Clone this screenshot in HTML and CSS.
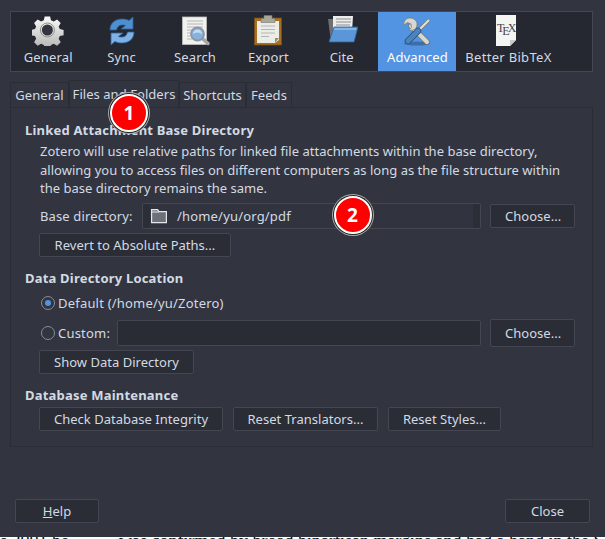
FILE: index.html
```html
<!DOCTYPE html>
<html lang="en">
<head>
  <meta charset="UTF-8">
  <title>Zotero Preferences</title>
  <link rel="stylesheet" href="styles.css">
</head>
<body>
  <div class="window">
    <div class="toolbar">
      <div class="pane-btn">
        <svg class="pane-icon" viewBox="0 0 32 32">
          <defs>
            <linearGradient id="gearFill" x1="0" y1="0" x2="0" y2="1"><stop offset="0" stop-color="#fafafa"/><stop offset="1" stop-color="#b4b4b4"/></linearGradient>
          </defs>
          <path fill="url(#gearFill)" d="M13 1h6l1 4.200 3 1.300 3.800-2.300 4 4-2.300 3.800 1.300 3 4.200 1v5.800l-4.200 1-1.300 3 2.300 3.800-4 4-3.800-2.300-3 1.300-1 4.200h-6l-1-4.200-3-1.300-3.800 2.300-4-4 2.300-3.800-1.300-3-4.200-1v-5.800l4.200-1 1.300-3-2.300-3.800 4-4 3.800 2.300 3-1.300z" transform="translate(1 1.600) scale(.9)"/>
          <circle cx="15.400" cy="16" r="5.500" fill="#33353c"/>
          <circle cx="15.400" cy="16" r="7" fill="none" stroke="#8f8f8f" stroke-width="1"/>
        </svg>
        <span>General</span>
      </div>
      <div class="pane-btn">
        <svg class="pane-icon" viewBox="0 0 32 32">
          <path fill="#4f8fd0" stroke="#2c5f9e" stroke-width=".8" d="M4 16C4 9 9 5 16 5c3 0 5 .5 7 1.500L27 3v12H15l4.500-3.500C18.500 11 17.500 11 16 11c-3 0-5 2-5.500 5z"/>
          <path fill="#7fb2e4" stroke="#2c5f9e" stroke-width=".8" d="M28 18c0 7-5 11-12 11-3 0-5-.5-7-1.500L5 31V19h12l-4.500 3.500c1 .5 2 .5 3.500.5 3 0 5-2 5.500-5z"/>
        </svg>
        <span>Sync</span>
      </div>
      <div class="pane-btn">
        <svg class="pane-icon" viewBox="0 0 32 32">
          <rect x="3.500" y="3" width="24" height="27.500" fill="#f1f1ee" stroke="#bdbdbd" stroke-width=".8"/>
          <path stroke="#b3b6ba" stroke-width="1" d="M8 7h16M8 10h16M8 13h16M8 16h5M8 19h3M8 22h3M8 25h5"/>
          <path stroke="#a5a7a9" stroke-width="3.500" stroke-linecap="round" d="M24 25l5 4.500"/>
          <circle cx="18.500" cy="20" r="6.500" fill="#86b2dc" stroke="#8c96a3" stroke-width="1.800"/>
          <path fill="#c4dcf2" d="M14 20a4.500 4.500 0 0 1 9 0c-3-2-6-2-9 0z"/>
        </svg>
        <span>Search</span>
      </div>
      <div class="pane-btn">
        <svg class="pane-icon" viewBox="0 0 32 32">
          <rect x="2.500" y="4" width="27" height="27" fill="#a86f1e" stroke="#7c4e10" stroke-width=".8"/>
          <path fill="#ebebe7" d="M5 7h22v19l-4 3H5z"/>
          <path fill="#8f8f8a" d="M23 29v-5h4z"/>
          <path stroke="#b4b4b0" stroke-width="1" d="M9 12h14M9 15.500h14M9 19h14M9 22.500h8"/>
          <path fill="#a8a89a" stroke="#77776c" stroke-width=".6" d="M12 1.500h8v3h3v4H9v-4h3z"/>
        </svg>
        <span>Export</span>
      </div>
      <div class="pane-btn">
        <svg class="pane-icon" viewBox="0 0 32 32">
          <path fill="#6f6f6f" d="M2 5h9l2-2h6v25H5z"/>
          <path fill="#ececec" d="M7 2h20l-1 16H7z"/>
          <path stroke="#8e8e8e" stroke-width="1" d="M10 5h15M10 8h15M10 11h14"/>
          <path fill="#5b97d8" stroke="#2e5f98" stroke-width=".8" d="M8 13h24l-4 15H3z"/>
          <path fill="#85b6e8" d="M8.500 14h22l-.6 2H8z"/>
        </svg>
        <span>Cite</span>
      </div>
      <div class="pane-btn pane-active">
        <svg class="pane-icon" viewBox="0 0 32 32">
          <ellipse cx="16" cy="29.500" rx="13" ry="2" fill="#3c6ea8"/>
          <path stroke="#77776f" stroke-width="5.500" stroke-linecap="round" d="M10 12l16 16"/>
          <path stroke="#d8d8d2" stroke-width="4" stroke-linecap="round" d="M10 12l16 16"/>
          <path fill="#d8d8d2" stroke="#77776f" stroke-width=".7" d="M9 4C5 4 2.500 7 3 11l3.500-2.500L10 10l.5 3.500L8 16c3.500 1 7.500-.5 8-5 .5-4-3-7-7-7z"/>
          <path stroke="#77776f" stroke-width="3.400" stroke-linecap="round" d="M27.500 6.500L17 17"/>
          <path stroke="#e0e0da" stroke-width="2.200" stroke-linecap="round" d="M27.500 6.500L17 17"/>
          <path stroke="#234f7e" stroke-width="6.500" stroke-linecap="round" d="M17 17L7 27"/>
          <path stroke="#4a83bd" stroke-width="5" stroke-linecap="round" d="M17 17L7 27"/>
        </svg>
        <span>Advanced</span>
      </div>
      <div class="pane-btn pane-wide">
        <svg class="pane-icon" viewBox="0 0 32 32">
          <path fill="#f4f4f2" d="M4 1h20v25l-6 6H4z"/>
          <path fill="#c9c9c7" d="M18 32v-6h6z"/>
          <text class="tex-mark" x="5" y="18">T<tspan dy="3">E</tspan><tspan dy="-3">X</tspan></text>
        </svg>
        <span>Better BibTeX</span>
      </div>
    </div>

    <div class="tabs">
      <div class="tab tab-general">General</div>
      <div class="tab tab-active">Files and Folders</div>
      <div class="tab tab-shortcuts">Shortcuts</div>
      <div class="tab tab-feeds">Feeds</div>
    </div>

    <div class="panel">
      <h4 class="section-title">Linked Attachment Base Directory</h4>
      <div class="section-body">
        <p class="desc">Zotero will use relative paths for linked file attachments within the base directory, allowing you to access files on different computers as long as the file structure within the base directory remains the same.</p>
        <div class="row base-row">
          <span class="row-label">Base directory:</span>
          <div class="path-field">
            <div class="path-value">
              <svg class="folder-icon" viewBox="0 0 16 16">
                <path fill="#6d7079" stroke="#e4e6ea" stroke-width="1.200" d="M.6 1.600h6l1.400 2h7.400v11H.6z"/>
                <path fill="none" stroke="#e4e6ea" stroke-width="1" d="M.6 4h7.400"/>
              </svg>
              <span>/home/yu/org/pdf</span>
            </div>
          </div>
          <button class="btn btn-choose">Choose...</button>
        </div>
        <div class="row">
          <button class="btn btn-revert">Revert to Absolute Paths...</button>
        </div>
      </div>

      <h4 class="section-title data-title">Data Directory Location</h4>
      <div class="section-body">
        <div class="radio-line default-line">
          <span class="radio radio-on"></span>
          <span>Default (/home/yu/Zotero)</span>
        </div>
        <div class="row custom-row">
          <div class="radio-line">
            <span class="radio"></span>
            <span>Custom:</span>
          </div>
          <div class="text-field"></div>
          <button class="btn btn-choose">Choose...</button>
        </div>
        <div class="row">
          <button class="btn">Show Data Directory</button>
        </div>
      </div>

      <h4 class="section-title db-title">Database Maintenance</h4>
      <div class="section-body">
        <div class="row btn-row">
          <button class="btn btn-check">Check Database Integrity</button>
          <button class="btn btn-translators">Reset Translators...</button>
          <button class="btn btn-styles">Reset Styles...</button>
        </div>
      </div>
    </div>

    <div class="dialog-buttons">
      <button class="btn btn-dialog btn-help"><u>H</u>elp</button>
      <button class="btn btn-dialog">Close</button>
    </div>
  </div>

  <div class="page-behind">
    <span class="behind-left">s 2001 be</span><span>was confirmed by broad bipartisan margins and had a hand in the Senate floor debate. S</span>
  </div>

  <div class="marker marker-one">1</div>
  <div class="marker marker-two">2</div>
</body>
</html>
```

FILE: styles.css
```css
* {
  box-sizing: border-box;
}

html,
body {
  margin: 0;
  height: 539px;
  overflow: hidden;
}

body {
  position: relative;
  font-family: 'Noto Sans', sans-serif;
  font-size: 13px;
  color: #d3dae3;
  background: #fff;
}

.window {
  height: 537px;
  padding: 11px 12px 0 10px;
  background: #323540;
}

/* top pane switcher */
.toolbar {
  display: flex;
  height: 61px;
  padding-left: 0.5px;
  background: #252830;
  border: 1px solid #444751;
}

.pane-btn {
  width: 73.4px;
  display: flex;
  flex-direction: column;
  align-items: center;
  padding-top: 2px;
}

.pane-btn span {
  line-height: 18px;
  margin-top: 2px;
  letter-spacing: 0.15px;
  white-space: nowrap;
}

.pane-icon {
  display: block;
  width: 32px;
  height: 32px;
}

.pane-active {
  width: 78px;
  background: #5294e2;
  color: #fff;
}

.pane-wide {
  width: 104px;
}

.pane-wide span {
  letter-spacing: 0.3px;
}

.tex-mark {
  font-family: 'Liberation Serif', serif;
  font-size: 12px;
  letter-spacing: -2px;
  fill: #444;
}

/* tabs */
.tabs {
  display: flex;
  align-items: flex-end;
  height: 27px;
  margin-top: 8px;
}

.tab {
  height: 25px;
  padding-top: 3px;
  line-height: 19px;
  text-align: center;
  white-space: nowrap;
  letter-spacing: 0.05px;
  border: 1px solid #2a2d35;
  border-bottom: 0;
}

.tab-general {
  width: 59px;
}

.tab-active {
  width: 110px;
  height: 27px;
  padding-top: 4px;
  background: #323540;
}

.tab-shortcuts {
  width: 67px;
}

.tab-feeds {
  width: 46px;
}

.panel {
  height: 340px;
  padding: 12px 17px 0 14px;
  border: 1px solid #2a2d35;
}

.section-title {
  margin: 0;
  font-size: 13px;
  font-weight: 700;
  line-height: 20px;
  letter-spacing: 0.2px;
}

.data-title {
  margin-top: 11px;
}

.db-title {
  margin-top: 11px;
}

.section-body {
  padding-left: 14px;
}

.desc {
  margin: 2px 0 0 1px;
  line-height: 18.500px;
  letter-spacing: 0.015px;
}

.row {
  display: flex;
  align-items: center;
  margin-top: 4px;
}

.base-row {
  margin-top: 5px;
  height: 26px;
}

.row-label {
  width: 103px;
  padding-left: 1px;
  flex: none;
  letter-spacing: 0.13px;
}

.path-field {
  flex: 1;
  height: 26px;
  padding: 0 7px;
  background: #2b2e37;
  border: 1px solid #444751;
  border-radius: 2px;
}

.path-value {
  display: flex;
  align-items: center;
  gap: 10px;
  height: 100%;
  letter-spacing: 0.18px;
  background: #31343e;
}

.folder-icon {
  width: 16px;
  height: 16px;
  margin-left: 1px;
}

.text-field {
  flex: 1;
  height: 26px;
  background: #292c35;
  border: 1px solid #444751;
  border-radius: 2px;
}

.btn {
  height: 24px;
  padding: 0 14px;
  font: inherit;
  white-space: nowrap;
  letter-spacing: 0.02px;
  color: inherit;
  background: #2a2d36;
  border: 1px solid #444751;
  border-radius: 2px;
}

.btn-choose {
  width: 85px;
  flex: none;
  margin-left: 9px;
}

.btn-revert {
  width: 192px;
  padding: 0;
}

.btn-check {
  width: 184px;
  padding: 0;
}

.btn-translators {
  width: 145px;
  padding: 0;
}

.btn-styles {
  width: 113px;
  padding: 0;
}

.default-line {
  margin: 4px 0 0 2px;
  height: 22px;
}

.radio-line {
  display: flex;
  align-items: center;
  gap: 3px;
  letter-spacing: 0.2px;
}

.radio {
  width: 14px;
  height: 14px;
  border: 1px solid #8a8d94;
  border-radius: 50%;
  display: flex;
  align-items: center;
  justify-content: center;
}

.radio-on::after {
  content: "";
  width: 6px;
  height: 6px;
  border-radius: 50%;
  background: #5294e2;
}

.custom-row {
  margin-top: 6px;
  padding-left: 2px;
  height: 26px;
}

.custom-row .radio-line {
  width: 76px;
}

.custom-row .btn-choose {
  height: 28px;
}

.btn-row {
  gap: 10px;
  margin-top: 2px;
}

.dialog-buttons {
  display: flex;
  justify-content: space-between;
  margin-top: 52px;
  padding: 0 3px 0 5px;
}

.btn-dialog {
  width: 85px;
}

.btn-help {
  width: 84px;
}

/* the page behind the dialog, only its top edge shows */
.page-behind {
  height: 2px;
  overflow: hidden;
  white-space: nowrap;
  font-family: 'Liberation Serif', serif;
  font-size: 18px;
  line-height: 9px;
  color: #111;
  background: #fff;
}

.behind-left {
  display: inline-block;
  width: 119px;
}

/* numbered callouts laid over the dialog */
.marker {
  position: absolute;
  width: 38px;
  height: 38px;
  font-size: 19px;
  font-weight: 700;
  line-height: 34px;
  text-align: center;
  color: #fff;
  background: #f00;
  border: 2px solid #fff;
  border-radius: 50%;
  box-shadow: 0 0 0 1px #222, 0 0 0 2px #aaa;
}

.marker-one {
  left: 110px;
  top: 94px;
}

.marker-two {
  left: 333.500px;
  top: 195.500px;
}
```
